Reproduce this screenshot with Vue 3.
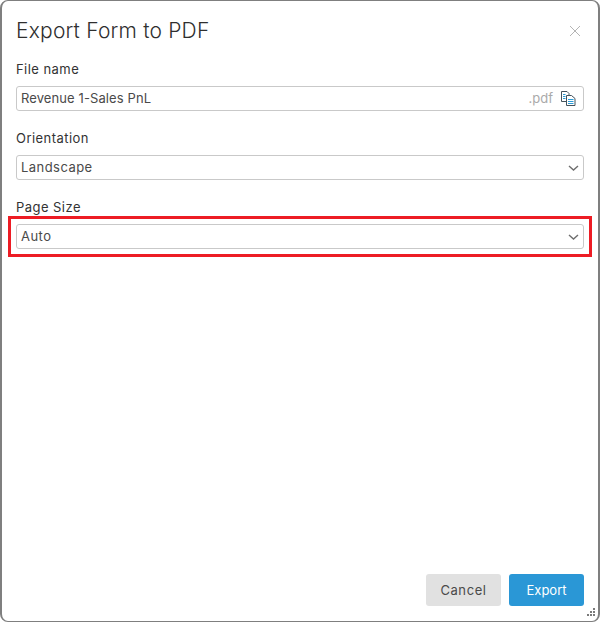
<script setup>
const dots = [
  [6, 0],
  [3, 3], [6, 3],
  [0, 6], [3, 6], [6, 6],
]
</script>

<template>
  <div class="dialog">
    <div class="header">
      <div class="title">Export Form to PDF</div>
      <svg class="close" width="12" height="12" viewBox="0 0 12 12">
        <path d="M1 1L11 11M11 1L1 11" stroke="#b4b4b4" stroke-width="1" fill="none" />
      </svg>
    </div>

    <div class="body">
      <div class="field">
        <div class="label">File name</div>
        <div class="input">
          <span class="value tight">Revenue 1-Sales PnL</span>
          <span class="ext">.pdf</span>
          <svg class="copy" width="15" height="15" viewBox="0 0 15 15">
            <path d="M0.5 0.5H6L8 2.5V10.5H0.5Z" fill="#fff" stroke="#44525c" stroke-width="1" />
            <path d="M5.5 4.5H10.5L14 7.5V14.5H5.5Z" fill="#fff" stroke="#44525c" stroke-width="1" />
            <path d="M2 3.5H4.5M2 5.5H4.5M2 7.5H4.5M7 8.5H12.5M7 10.5H12.5M7 12.5H12.5" stroke="#2a9ad6" stroke-width="1" fill="none" />
          </svg>
        </div>
      </div>

      <div class="field">
        <div class="label">Orientation</div>
        <div class="input">
          <span class="value">Landscape</span>
          <svg class="chevron" width="11" height="6" viewBox="0 0 11 6">
            <path d="M1 1L5.5 5L10 1" stroke="#6e6e6e" stroke-width="1.4" fill="none" />
          </svg>
        </div>
      </div>

      <div class="field highlighted">
        <div class="label">Page Size</div>
        <div class="input">
          <span class="value">Auto</span>
          <svg class="chevron" width="11" height="6" viewBox="0 0 11 6">
            <path d="M1 1L5.5 5L10 1" stroke="#6e6e6e" stroke-width="1.4" fill="none" />
          </svg>
        </div>
        <div class="red-box"></div>
      </div>
    </div>

    <div class="footer">
      <button class="btn cancel">Cancel</button>
      <button class="btn export">Export</button>
    </div>

    <svg class="grip" width="8" height="8" viewBox="0 0 8 8">
      <rect v-for="(d, i) in dots" :key="i" :x="d[0]" :y="d[1]" width="2" height="2" fill="#7a7a7a" />
    </svg>
  </div>
</template>

<style>
html,
body {
  margin: 0;
  background: #fff;
}
</style>

<style scoped>
.dialog {
  position: relative;
  box-sizing: border-box;
  width: 600px;
  height: 622px;
  display: flex;
  flex-direction: column;
  background: #fff;
  border: 1px solid #7f7f7f;
  border-left-width: 2px;
  border-right-width: 2px;
  border-radius: 8px;
  padding: 0 14px 15px;
  font-family: "Inter", "Liberation Sans", sans-serif;
  color: #333;
}
.header {
  display: flex;
  justify-content: space-between;
  align-items: center;
  height: 59px;
}
.title {
  font-size: 21px;
  font-weight: 300;
  color: #2f2f2f;
  letter-spacing: 0.2px;
}
.close {
  margin-right: 3px;
}
.body {
  flex: 1;
  display: flex;
  flex-direction: column;
  gap: 18px;
}
.field {
  position: relative;
  display: flex;
  flex-direction: column;
  gap: 8px;
}
.label {
  height: 18px;
  line-height: 18px;
  font-size: 13px;
  color: #333;
  letter-spacing: 0.45px;
}
.input {
  box-sizing: border-box;
  height: 25px;
  display: flex;
  align-items: center;
  padding: 0 4px;
  border: 1px solid #c9c9c9;
  border-radius: 3px;
  font-size: 13px;
  line-height: 21px;
  color: #4a4a4a;
}
.value {
  flex: 1;
  letter-spacing: 0.45px;
  margin-top: -1px;
}
.value.tight {
  letter-spacing: 0.1px;
}
.ext {
  color: #aaa;
  margin-right: 8px;
  margin-top: -1px;
}
.copy {
  margin-right: 3px;
}
.red-box {
  position: absolute;
  left: -8px;
  right: -8px;
  bottom: -8px;
  height: 41px;
  box-sizing: border-box;
  border: 3px solid #ed1c24;
}
.footer {
  display: flex;
  justify-content: flex-end;
  gap: 8px;
}
.btn {
  width: 75px;
  height: 32px;
  border: none;
  border-radius: 3px;
  font-family: inherit;
  font-size: 13px;
  padding: 0;
}
.cancel {
  background: #e1e1e1;
  color: #4a4a4a;
  letter-spacing: 0.6px;
}
.export {
  background: #2a97d6;
  color: #fff;
}
.grip {
  position: absolute;
  right: 3px;
  bottom: 5px;
}
</style>
